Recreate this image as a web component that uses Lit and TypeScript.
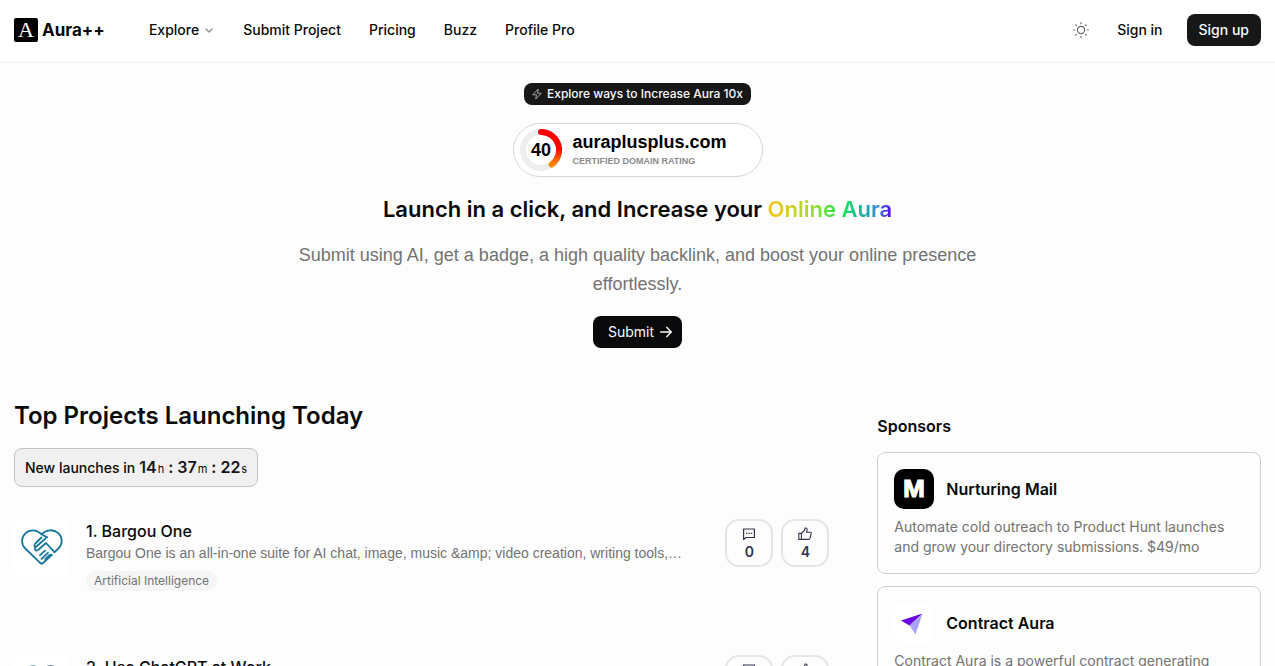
import { LitElement, html, css, svg } from "lit";
import { customElement, property } from "lit/decorators.js";

interface Project {
  name: string;
  summary: string;
  tag: string;
  comments: number;
  likes: number;
  color: string;
}

interface Sponsor {
  name: string;
  text: string;
  logo: "mail" | "plane";
}

const projects: Project[] = [
  {
    name: "Bargou One",
    summary:
      "Bargou One is an all-in-one suite for AI chat, image, music &amp; video creation, writing tools,…",
    tag: "Artificial Intelligence",
    comments: 0,
    likes: 4,
    color: "#17789c",
  },
  {
    name: "Use ChatGPT at Work",
    summary: "Practical guides and prompts for using ChatGPT at work.",
    tag: "Artificial Intelligence",
    comments: 0,
    likes: 3,
    color: "#1d4650",
  },
];

const sponsors: Sponsor[] = [
  {
    name: "Nurturing Mail",
    text: "Automate cold outreach to Product Hunt launches and grow your directory submissions. $49/mo",
    logo: "mail",
  },
  {
    name: "Contract Aura",
    text: "Contract Aura is a powerful contract generating platform for freelancers and teams.",
    logo: "plane",
  },
];

const reset = css`
  *,
  *::before,
  *::after {
    box-sizing: border-box;
  }
  h1,
  h2,
  h3,
  p {
    margin: 0;
  }
  a {
    color: inherit;
    text-decoration: none;
  }
  button {
    font: inherit;
    color: inherit;
    border: 0;
    background: none;
    padding: 0;
    cursor: pointer;
  }
  svg {
    display: block;
    flex: none;
  }
`;

@customElement("site-header")
export class SiteHeader extends LitElement {
  static styles = [
    reset,
    css`
      :host {
        display: block;
        background: #fff;
        border-bottom: 1px solid #f3f3f3;
      }
      .bar {
        display: flex;
        align-items: center;
        padding: 14px 14px 16px;
        font-size: 14px;
        font-weight: 500;
        line-height: 20px;
      }
      .brand {
        display: flex;
        align-items: center;
        gap: 4px;
        font-size: 17px;
        font-weight: 700;
      }
      .mark {
        width: 24px;
        height: 24px;
        border-radius: 2px;
        background: #000;
        color: #fff;
        font: 400 22px/24px "Liberation Serif", serif;
        text-align: center;
      }
      .links {
        display: flex;
        align-items: center;
        gap: 28px;
        margin-left: 44px;
      }
      .menu {
        display: flex;
        align-items: center;
        gap: 4px;
      }
      .actions {
        display: flex;
        align-items: center;
        margin-left: auto;
      }
      .signin {
        margin: 0 24px 0 28px;
      }
      .signup {
        background: #171717;
        color: #fafafa;
        border-radius: 8px;
        padding: 6px 12px;
      }
    `,
  ];

  render() {
    return html`
      <header class="bar">
        <a class="brand" href="#"><span class="mark">A</span><span>Aura++</span></a>
        <nav class="links">
          <button class="menu" type="button">
            Explore
            <svg width="12" height="12" viewBox="0 0 24 24" fill="none" stroke="#8a8a8a" stroke-width="2.4" stroke-linecap="round" stroke-linejoin="round">
              <path d="m6 10 6 6 6-6" />
            </svg>
          </button>
          <a href="#submit">Submit Project</a>
          <a href="#pricing">Pricing</a>
          <a href="#buzz">Buzz</a>
          <a href="#profile">Profile Pro</a>
        </nav>
        <div class="actions">
          <button type="button" aria-label="Toggle theme">
            <svg width="16" height="16" viewBox="0 0 24 24" fill="none" stroke="#666" stroke-width="1.8" stroke-linecap="round">
              <circle cx="12" cy="12" r="5.4" />
              <path d="M12 1v1.4M12 21.6V23M4.2 4.2l1 1M18.8 18.8l1 1M1 12h1.4M21.6 12H23M5.2 18.8l-1 1M19.8 4.2l-1 1" />
            </svg>
          </button>
          <a class="signin" href="#signin">Sign in</a>
          <a class="signup" href="#signup">Sign up</a>
        </div>
      </header>
    `;
  }
}

@customElement("hero-section")
export class HeroSection extends LitElement {
  static styles = [
    reset,
    css`
      :host {
        display: block;
      }
      .hero {
        display: flex;
        flex-direction: column;
        align-items: center;
        text-align: center;
        padding: 20px 14px 0;
      }
      .pill {
        display: flex;
        align-items: center;
        gap: 5px;
        padding: 3px 8px;
        border-radius: 8px;
        background: #171717;
        color: #fafafa;
        font-size: 12px;
        font-weight: 500;
        line-height: 16px;
      }
      .rating {
        display: flex;
        align-items: center;
        gap: 10px;
        width: 250px;
        margin-top: 18px;
        padding: 5px;
        border: 1px solid #d6d6d6;
        border-radius: 27px;
        background: #fff;
        font-family: "Liberation Sans", Arial, sans-serif;
        font-weight: 700;
        text-align: left;
        color: #000;
      }
      .domain {
        font-size: 18px;
        line-height: 22px;
      }
      .note {
        font-size: 9px;
        line-height: 16px;
        color: #8b8b8b;
      }
      .score {
        font-size: 18px;
      }
      h1 {
        margin-top: 16px;
        font-size: 22px;
        font-weight: 600;
        line-height: 32px;
      }
      .rainbow {
        background: linear-gradient(90deg, #fbc41a, #a4dc2c 35%, #22e84f 58%, #10b8a0 76%, #3b82d8 89%, #5a00f0);
        -webkit-background-clip: text;
        background-clip: text;
        color: transparent;
      }
      .lead {
        max-width: 700px;
        margin-top: 16px;
        font-family: "Liberation Sans", Arial, sans-serif;
        font-size: 18px;
        line-height: 29px;
        color: #737373;
      }
      .submit {
        display: flex;
        align-items: center;
        gap: 4px;
        margin-top: 17px;
        padding: 6px 8px 6px 15px;
        border-radius: 8px;
        background: #09090b;
        color: #fafafa;
        font-size: 14px;
        line-height: 20px;
      }
    `,
  ];

  render() {
    return html`
      <section class="hero">
        <a class="pill" href="#boost">
          <svg width="10" height="12" viewBox="0 0 20 24" fill="none" stroke="#a3a3a3" stroke-width="2" stroke-linejoin="round">
            <path d="M12.5 2 1.5 13.5H9L7.5 22l11-11.500H11z" />
          </svg>
          <span>Explore ways to Increase Aura 10x</span>
        </a>
        <div class="rating">
          <svg width="44" height="42" viewBox="0 0 44 42">
            <defs>
              <linearGradient id="arc" x1="0" y1="0" x2="0" y2="1">
                <stop offset="0.5" stop-color="#f00" />
                <stop offset="1" stop-color="#ff8a00" />
              </linearGradient>
            </defs>
            <circle cx="22" cy="21" r="18" fill="none" stroke="#eee" stroke-width="6" />
            <path d="M22 3A18 18 0 0 1 32.6 35.6" fill="none" stroke="url(#arc)" stroke-width="6" stroke-linecap="round" />
            <text class="score" x="22" y="27" text-anchor="middle">40</text>
          </svg>
          <div>
            <div class="domain">auraplusplus.com</div>
            <div class="note">CERTIFIED DOMAIN RATING</div>
          </div>
        </div>
        <h1>Launch in a click, and Increase your <span class="rainbow">Online Aura</span></h1>
        <p class="lead">
          Submit using AI, get a badge, a high quality backlink, and boost your online presence
          effortlessly.
        </p>
        <a class="submit" href="#submit">
          <span>Submit</span>
          <svg width="16" height="16" viewBox="0 0 24 24" fill="none" stroke="currentColor" stroke-width="2" stroke-linecap="round" stroke-linejoin="round">
            <path d="M4 12h16M13 5l7 7-7 7" />
          </svg>
        </a>
      </section>
    `;
  }
}

@customElement("project-row")
export class ProjectRow extends LitElement {
  static styles = [
    reset,
    css`
      :host {
        display: block;
        min-width: 0;
      }
      .row {
        display: flex;
        gap: 16px;
      }
      .icon {
        flex: none;
        display: grid;
        place-items: center;
        width: 56px;
        height: 56px;
        border-radius: 8px;
        background: #fff;
      }
      .info {
        flex: 1;
        min-width: 0;
      }
      h3 {
        font-size: 16px;
        font-weight: 500;
        line-height: 24px;
      }
      .summary {
        font-family: "Liberation Sans", Arial, sans-serif;
        font-size: 14px;
        line-height: 20px;
        color: #737373;
        overflow: hidden;
        white-space: nowrap;
        text-overflow: ellipsis;
      }
      .tag {
        display: inline-block;
        margin-top: 8px;
        padding: 2px 8px;
        border-radius: 10px;
        background: #f5f5f5;
        color: #737373;
        font-size: 12px;
        line-height: 16px;
      }
      .votes {
        display: flex;
        gap: 8px;
        margin-left: 8px;
      }
      .vote {
        display: flex;
        flex-direction: column;
        align-items: center;
        gap: 2px;
        width: 48px;
        height: 48px;
        padding-top: 6px;
        border: 2px solid #e5e5e5;
        border-radius: 14px;
        color: #33334d;
        font-size: 14px;
        font-weight: 600;
        line-height: 18px;
      }
    `,
  ];

  @property({ attribute: false }) project!: Project;
  @property({ type: Number }) rank = 1;

  render() {
    const p = this.project;
    return html`
      <article class="row">
        <div class="icon">
          <svg width="42" height="36" viewBox="0 0 42 36" fill="none" stroke=${p.color} stroke-width="1.8" stroke-linecap="round" stroke-linejoin="round">
            <path d="M19.500 34.200 4.200 19.500C-.2 15.200.2 8.200 4.400 4.300 8.800.2 15.500.2 20.500 5.200" />
            <path d="M20.500 5.200C25.500.2 32.500.100 37.300 4.100c4.600 4.300 4.600 11 .2 15.400L33.500 23.200" />
            <path d="M20.500 5.200l5.800 3.200M24.500 9.500 14.800 18c-2.200 1.800-.2 4.600 2.300 3l7.900-7 8.500 9.200M20.500 8.500l-6.200 6c-1.400 1.500-1.300 2.800.5 3.500" />
            <path d="M19 26.200l5-4.500M20.500 29.800l6.500-6M24.300 30l4.800-4.400M19.500 34.200c.8.600 1.700.5 2.500-.2l9-8.200" />
          </svg>
        </div>
        <div class="info">
          <h3><a href="#project">${this.rank}. ${p.name}</a></h3>
          <p class="summary">${p.summary}</p>
          <a class="tag" href="#tag">${p.tag}</a>
        </div>
        <div class="votes">
          <button class="vote" type="button" aria-label="Comments">
            <svg width="14" height="14" viewBox="0 0 14 14" fill="none" stroke="currentColor" stroke-width="1.200" stroke-linejoin="round">
              <path d="M1.600 2h10.800v8.500H4L1.600 12.600z" />
              <path d="M4 6.300h1.300M6.400 6.300h1.300M8.800 6.300h1.300" />
            </svg>
            <span>${p.comments}</span>
          </button>
          <button class="vote" type="button" aria-label="Upvote">
            <svg width="14" height="14" viewBox="0 0 14 14" fill="none" stroke="currentColor" stroke-width="1.100" stroke-linejoin="round">
              <path d="M.8 6.400h2.600v6H.8zM3.400 6.400 6.600 3l.5-2c1.500-.3 2.200.8 2 2l-.5 2.200h3.800c.7 0 1 .5.800 1.200l-1.300 5c-.2.700-.6 1-1.200 1H3.400" />
            </svg>
            <span>${p.likes}</span>
          </button>
        </div>
      </article>
    `;
  }
}

@customElement("sponsor-card")
export class SponsorCard extends LitElement {
  static styles = [
    reset,
    css`
      :host {
        display: block;
      }
      .card {
        display: block;
        padding: 16px;
        border: 1px solid #cfcfcf;
        border-radius: 8px;
      }
      .head {
        display: flex;
        align-items: center;
        gap: 12px;
        margin-bottom: 8px;
      }
      .logo {
        border-radius: 10px;
        overflow: hidden;
      }
      .letter {
        font-size: 23px;
        font-weight: 700;
      }
      h3 {
        font-size: 16px;
        font-weight: 600;
        line-height: 24px;
      }
      p {
        font-size: 14px;
        line-height: 20px;
        color: #737373;
      }
    `,
  ];

  @property({ attribute: false }) sponsor!: Sponsor;

  private logo() {
    return this.sponsor.logo === "mail"
      ? svg`<rect width="40" height="40" fill="#000"/>
          <text class="letter" x="20" y="28" text-anchor="middle" fill="#fff" stroke="#fff">M</text>`
      : svg`<rect width="40" height="40" fill="#fff"/>
          <path d="M28.500 10.500 7 17.500l8.500 5z" fill="#6a00e6"/>
          <path d="M28.500 10.500 15.500 22.500l6 9z" fill="#aaa2f6"/>`;
  }

  render() {
    return html`
      <a class="card" href="#sponsor">
        <div class="head">
          <svg class="logo" width="40" height="40" viewBox="0 0 40 40">${this.logo()}</svg>
          <h3>${this.sponsor.name}</h3>
        </div>
        <p>${this.sponsor.text}</p>
      </a>
    `;
  }
}

@customElement("app-root")
export class AppRoot extends LitElement {
  static styles = [
    reset,
    css`
      :host {
        display: block;
        height: 100vh;
        overflow-y: auto;
        scrollbar-width: none;
        background: #fdfdfd;
        color: #0a0a0a;
        font-family: Inter, "Liberation Sans", sans-serif;
      }
      .content {
        display: grid;
        grid-template-columns: repeat(3, minmax(0, 1fr));
        gap: 48px;
        padding: 52px 14px;
      }
      .main {
        grid-column: span 2;
      }
      h2 {
        font-size: 24px;
        font-weight: 600;
        line-height: 32px;
      }
      .timer {
        display: flex;
        align-items: center;
        gap: 4px;
        width: fit-content;
        min-height: 39px;
        margin-top: 16px;
        padding: 0 10px;
        border: 1px solid #c4c4c4;
        border-radius: 8px;
        background: #f0f0f0;
        font-size: 14px;
        font-weight: 500;
        line-height: 20px;
      }
      .clock {
        display: flex;
        align-items: baseline;
        gap: 4px;
      }
      b {
        font-size: 16px;
        font-weight: 600;
        color: #171717;
      }
      .unit {
        display: flex;
        align-items: baseline;
        gap: 1px;
      }
      small {
        font-size: 11px;
        font-weight: 400;
      }
      .list {
        display: grid;
        grid-template-columns: minmax(0, 1fr);
        gap: 64px;
        margin-top: 32px;
      }
      .aside {
        display: grid;
        align-content: start;
        gap: 12px;
        padding-top: 12px;
      }
      .label {
        font-size: 16px;
        line-height: 28px;
      }
    `,
  ];

  render() {
    return html`
      <site-header></site-header>
      <main>
        <hero-section></hero-section>
        <div class="content">
          <section class="main">
            <h2>Top Projects Launching Today</h2>
            <div class="timer">
              <span>New launches in</span>
              <span class="clock">
                <span class="unit"><b>14</b><small>h</small></span>
                <b>:</b>
                <span class="unit"><b>37</b><small>m</small></span>
                <b>:</b>
                <span class="unit"><b>22</b><small>s</small></span>
              </span>
            </div>
            <div class="list">
              ${projects.map((p, i) => html`<project-row .project=${p} .rank=${i + 1}></project-row>`)}
            </div>
          </section>
          <aside class="aside">
            <h2 class="label">Sponsors</h2>
            ${sponsors.map((s) => html`<sponsor-card .sponsor=${s}></sponsor-card>`)}
          </aside>
        </div>
      </main>
    `;
  }
}
